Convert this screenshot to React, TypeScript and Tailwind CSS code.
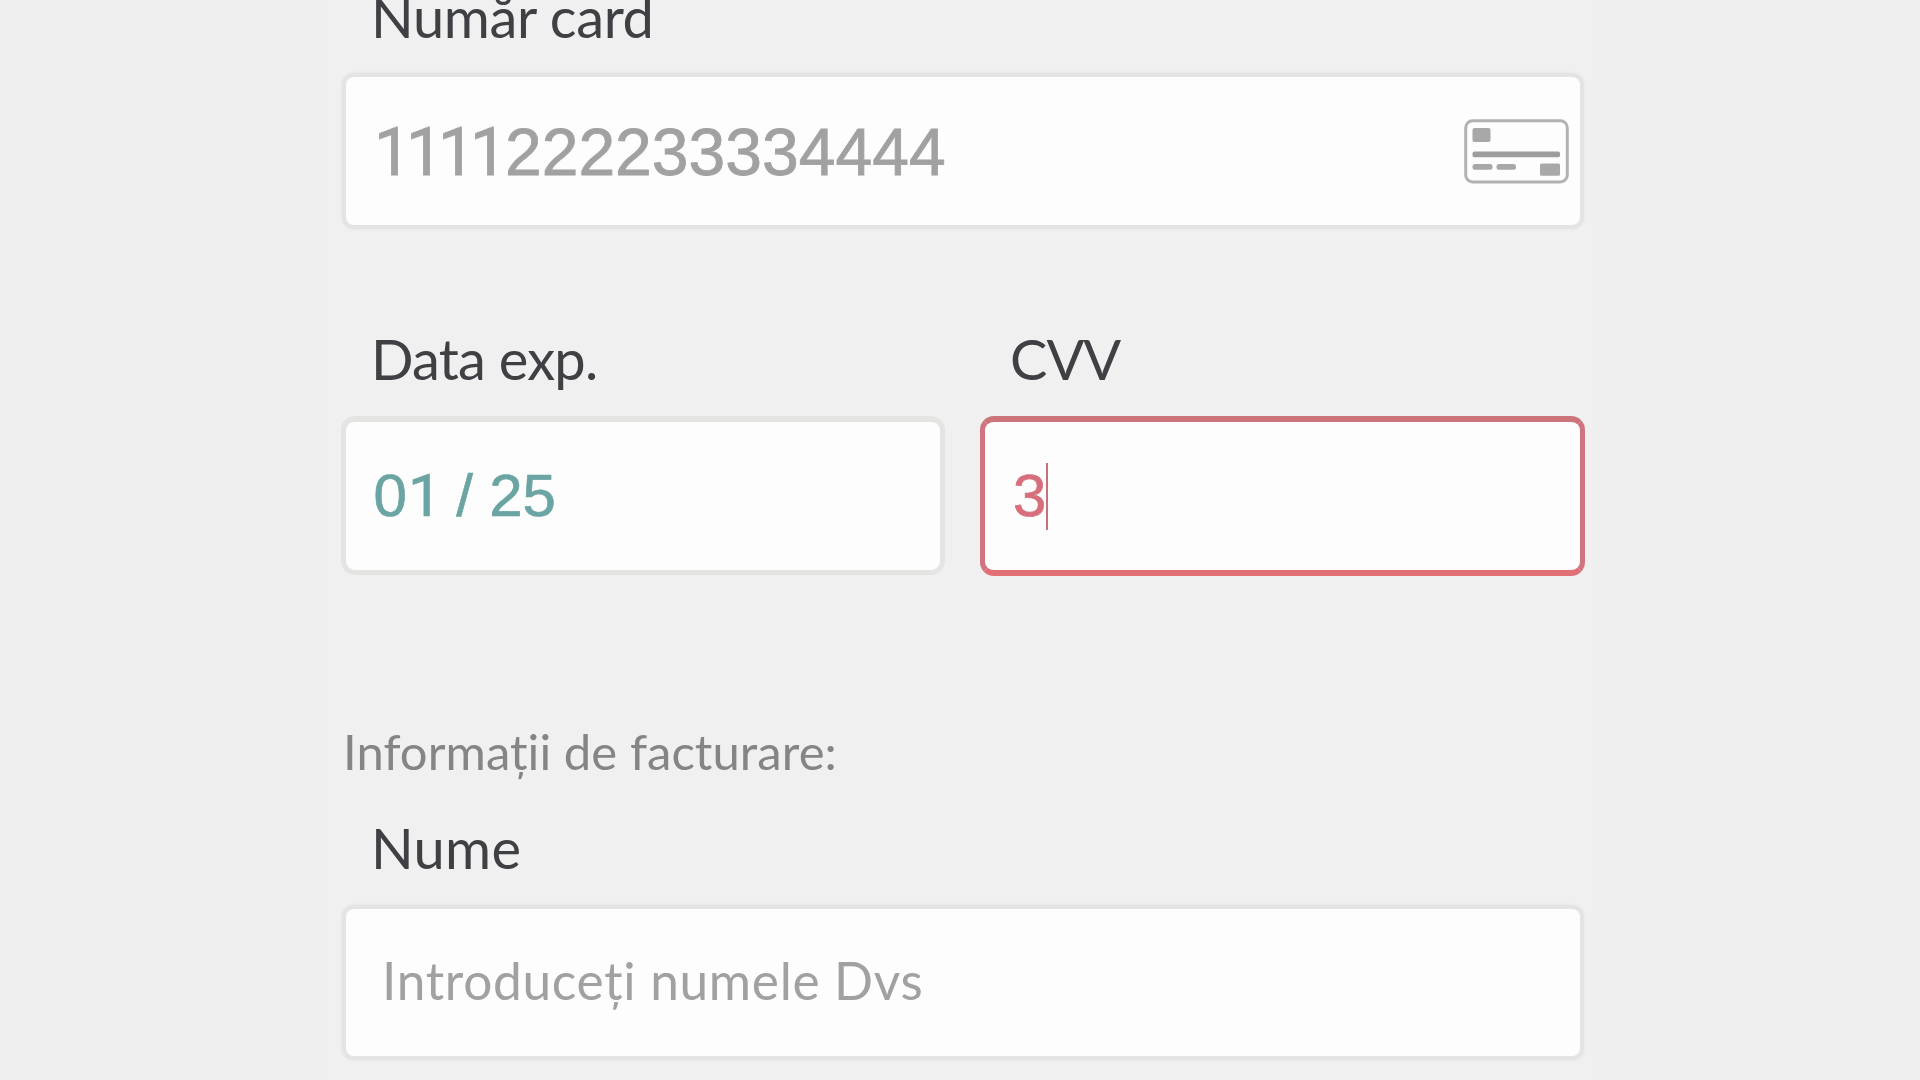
import type { ReactNode } from "react";

function Label({ children, className = "" }: { children: ReactNode; className?: string }) {
  return (
    <div className={`whitespace-nowrap pl-[30px] font-['Lato',sans-serif] text-[56px] text-[#3f4043] ${className}`}>
      {children}
    </div>
  );
}

function Field({ children, className = "" }: { children: ReactNode; className?: string }) {
  return (
    <div className={`flex items-center whitespace-nowrap bg-[#fdfdfd] ${className}`}>
      {children}
    </div>
  );
}

function CardIcon() {
  return (
    <svg width="106" height="66" viewBox="0 0 106 66" fill="none" className="shrink-0">
      <rect x="1.7" y="1.7" width="101.6" height="61.2" rx="7" stroke="#b2b2b2" strokeWidth="3" />
      <rect x="8.5" y="9" width="18" height="14" rx="2" fill="#a8a8a8" />
      <rect x="8.5" y="32.5" width="87.5" height="5.8" rx="2" fill="#9d9d9d" />
      <rect x="8.5" y="45" width="20" height="5.8" rx="2.5" fill="#a8a8a8" />
      <rect x="32.5" y="45" width="19.5" height="5.8" rx="2.5" fill="#a8a8a8" />
      <rect x="76" y="44.5" width="20" height="12.3" rx="1.5" fill="#a8a8a8" />
    </svg>
  );
}

export default function App() {
  return (
    <div className="h-[1080px] w-[1920px] overflow-hidden bg-[#efefef] pl-[326px]">
      <main className="flex h-full w-[1269px] flex-col bg-[#f0f0f0] pl-[15px] pr-[10px]">
        <section className="flex flex-col">
          <Label className="h-[73px] leading-[34px] tracking-[-0.35px]">Număr card</Label>
          <Field className="mx-[1px] mb-[1px] h-[156px] justify-between rounded-[12px] border-4 border-[#e4e4e4] pl-[28px] pr-[10px] shadow-[0_0_3px_#e2e2e2]">
            <span className="pt-[2px] font-['Liberation_Sans',sans-serif] text-[66px] leading-none tracking-[0.02px] text-[#a1a1a1] [-webkit-text-stroke:0.8px_#a1a1a1]">
              <span className="mr-[2.8px] font-['Roboto',sans-serif] tracking-[-5.06px]">1111</span>
              222233334444
            </span>
            <div className="pt-px">
              <CardIcon />
            </div>
          </Field>
        </section>

        <section className="mt-[86px] flex justify-between">
          <div className="w-[604px]">
            <Label className="h-[100px] leading-[86px] tracking-[-0.76px]">Data exp.</Label>
            <Field className="h-[159px] rounded-[14px] border-[5px] border-t-[6px] border-[#e4e5e3] pl-[27.5px]">
              <span className="font-['Liberation_Sans',sans-serif] text-[60px] leading-none tracking-[-0.2px] text-[#6ba5a3] [-webkit-text-stroke:0.7px_#6ba5a3]">
                0<span className="ml-[1.3px] mr-[-1.7px] font-['Roboto',sans-serif]">1</span> / 25
              </span>
            </Field>
          </div>
          <div className="w-[605px]">
            <Label className="h-[100px] leading-[86px] tracking-[-1px]">CVV</Label>
            <Field className="h-[160px] rounded-[14px] border-x-[5px] border-y-[6px] border-x-[#d0747f] border-t-[#cb747a] border-b-[#e16f76] pl-[28px]">
              <span className="font-['Liberation_Sans',sans-serif] text-[60px] text-[#d66f7b] [-webkit-text-stroke:0.7px_#d66f7b]">
                3
              </span>
              <span className="-ml-[0.5px] h-[67px] w-[2px] bg-[#c4737d]" />
            </Field>
          </div>
        </section>

        <section className="mt-[136px] flex flex-col">
          <h2 className="h-[93px] whitespace-nowrap pl-[2px] font-['Lato',sans-serif] text-[49px] leading-[78px] tracking-[0.06px] text-[#858585]">
            Informații de facturare:
          </h2>
          <Label className="h-[100px] leading-[86px] tracking-[0.32px]">Nume</Label>
          <Field className="mx-[1px] h-[155px] rounded-[12px] border-4 border-[#e4e4e4] pb-[4px] pl-[36px] shadow-[0_0_3px_#e2e2e2]">
            <span className="font-['Lato',sans-serif] text-[51.4px] tracking-[0.69px] text-[#a1a1a1]">
              Introduceți numele Dvs
            </span>
          </Field>
        </section>
      </main>
    </div>
  );
}
